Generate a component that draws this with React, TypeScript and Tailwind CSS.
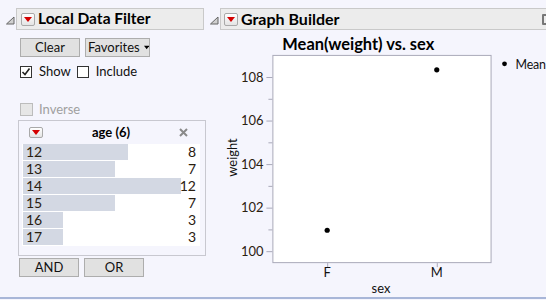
import React from 'react'

const FONT = { fontFamily: 'Lato, "Noto Sans", Arial, sans-serif' }

function Disclosure() {
  return (
    <div className="shrink-0 w-[10px] h-[9px] relative">
      <svg width="10" height="9" viewBox="0 0 10 9" style={{ display: 'block', width: 10, height: 9 }}>
        <path d="M9 1 L9 8 L1.5 8 Z" fill="#d0d0d0" stroke="#666666" strokeWidth="1" />
      </svg>
    </div>
  )
}

function RedMenu({ small }: { small?: boolean }) {
  return (
    <div
      className={`shrink-0 flex items-center justify-center rounded-[2px] border border-[#a9a9a9] bg-gradient-to-b from-white to-[#e4e4e4] ${
        small ? 'w-[14px] h-[11px]' : 'w-[14px] h-[13px]'
      }`}
    >
      <svg width="8" height="5" viewBox="0 0 8 5">
        <polygon points="0,0 8,0 4,5" fill="#d40000" />
      </svg>
    </div>
  )
}

function Btn({ children, w }: { children: React.ReactNode; w: string }) {
  return (
    <div
      className={`${w} h-[19px] flex items-center justify-center border border-[#adadad] bg-[#e1e1e1] text-[13px] text-[#111] leading-none`}
    >
      {children}
    </div>
  )
}

const ROWS = [
  { age: '12', n: 8 },
  { age: '13', n: 7 },
  { age: '14', n: 12 },
  { age: '15', n: 7 },
  { age: '16', n: 3 },
  { age: '17', n: 3 },
]

function Chart() {
  const y = (v: number) => 252 - (v - 100) * 21.85
  const majors = [100, 102, 104, 106, 108]
  const minors = [101, 103, 105, 107, 109]
  return (
    <svg width="338" height="268" viewBox="208 30 338 268" style={FONT} className="block">
      <text x="282" y="50" fontSize="16.5" fontWeight="700" fill="#000">
        Mean(weight) vs. sex
      </text>
      <rect x="272.5" y="55.5" width="219" height="208" fill="#fff" stroke="#a9a9b9" />
      {majors.map(v => (
        <g key={v}>
          <line x1="266" x2="272" y1={y(v) + 0.5} y2={y(v) + 0.5} stroke="#a9a9b9" />
          <text x="263" y={y(v) + 4.5} fontSize="13" textAnchor="end" fill="#2a2010">
            {v}
          </text>
        </g>
      ))}
      {minors.map(v =>
        y(v) > 56 ? (
          <line key={v} x1="268" x2="272" y1={y(v) + 0.5} y2={y(v) + 0.5} stroke="#a9a9b9" />
        ) : null,
      )}
      <text
        x="0"
        y="0"
        fontSize="13"
        fill="#111"
        textAnchor="middle"
        transform="translate(236 158) rotate(-90)"
      >
        weight
      </text>
      <line x1="327.5" x2="327.5" y1="264" y2="268" stroke="#a9a9b9" />
      <line x1="437.5" x2="437.5" y1="264" y2="268" stroke="#a9a9b9" />
      <text x="327" y="278" fontSize="13" textAnchor="middle" fill="#111">F</text>
      <text x="437" y="278" fontSize="13" textAnchor="middle" fill="#111">M</text>
      <text x="381" y="294" fontSize="13" textAnchor="middle" fill="#111">sex</text>
      <circle cx="327" cy={231} r="2.6" fill="#000" />
      <circle cx="437" cy={70} r="2.6" fill="#000" />
      <circle cx="505" cy="64" r="2.4" fill="#000" />
      <text x="516" y="69" fontSize="12.5" letterSpacing="-0.2" fill="#111">Mean</text>
    </svg>
  )
}

export default function App() {
  return (
    <div className="w-[546px] h-[300px] bg-[#f5f5fd] overflow-hidden flex flex-col" style={FONT}>
      <div className="flex flex-1 min-h-0">
        {/* Local Data Filter */}
        <div className="w-[208px] shrink-0 flex flex-col pt-[8px]">
          <div className="flex items-center">
            <div className="pl-[5px] pr-[1px] pt-[3px] shrink-0">
              <Disclosure />
            </div>
            <div className="w-[188px] h-[22px] flex items-center gap-[3px] pl-[4px] border border-[#c9c9c9] bg-[#ececec]">
              <RedMenu />
              <span className="text-[15.5px] font-bold text-black leading-none">Local Data Filter</span>
            </div>
          </div>

          <div className="flex gap-[5px] pl-[20px] mt-[8px]">
            <Btn w="w-[60px]">Clear</Btn>
            <div className="w-[65px] h-[19px] flex items-center gap-[4px] pl-[2px] border border-[#adadad] bg-[#e1e1e1] text-[13px] text-[#111] leading-none">
              Favorites
              <svg width="8" height="5" viewBox="0 0 8 5">
                <polygon points="0,0 8,0 4,5" fill="#000" />
              </svg>
            </div>
          </div>

          <div className="flex items-center pl-[20px] mt-[8px] text-[13px] text-[#111] leading-none">
            <div className="w-[12px] h-[12px] border border-[#333] bg-white flex items-center justify-center">
              <svg width="10" height="10" viewBox="0 0 10 10">
                <polyline points="1.5,5 4,7.5 8.5,1.5" fill="none" stroke="#222" strokeWidth="1.6" />
              </svg>
            </div>
            <span className="ml-[7px]">Show</span>
            <div className="ml-[6px] w-[12px] h-[12px] border border-[#333] bg-white" />
            <span className="ml-[7px]">Include</span>
          </div>

          <div className="flex items-center pl-[20px] mt-[25px] text-[13px] text-[#a0a0a0] leading-none">
            <div className="w-[13px] h-[13px] border border-[#bcbcbc] bg-[#e6e6e6]" />
            <span className="ml-[6px]">Inverse</span>
          </div>

          <div className="ml-[18px] mt-[4px] w-[188px] h-[136px] border border-[#c8c8d0] flex flex-col px-[3px]">
            <div className="h-[23px] flex items-center px-[7px]">
              <RedMenu small />
              <span className="flex-1 text-center text-[13px] font-bold text-black leading-none">age (6)</span>
              <svg width="9" height="9" viewBox="0 0 9 9" className="mr-[7px]">
                <path d="M1 1 L8 8 M8 1 L1 8" stroke="#8a8a8a" strokeWidth="2" />
              </svg>
            </div>
            <div className="bg-white w-[178px] h-[102px] flex flex-col gap-[1px]">
              {ROWS.map(r => (
                <div key={r.age} className="relative h-[16px] flex items-center">
                  <div
                    className="absolute left-[1px] top-0 bottom-0 bg-[#d3d8e3]"
                    style={{ width: `${Math.round((r.n / 12) * 158)}px` }}
                  />
                  <span className="relative pl-[4px] text-[14px] text-[#2a2010] leading-none flex-1">{r.age}</span>
                  <span className="relative pr-[4px] text-[14px] text-[#2a2010] leading-none">{r.n}</span>
                </div>
              ))}
            </div>
          </div>

          <div className="flex gap-[5px] pl-[19px] mt-[2px]">
            <Btn w="w-[60px]">AND</Btn>
            <Btn w="w-[60px]">OR</Btn>
          </div>
        </div>

        {/* Graph Builder */}
        <div className="flex-1 flex flex-col pt-[8px] min-w-0">
          <div className="flex items-center">
            <div className="pl-[1px] pr-[1px] pt-[3px] shrink-0">
              <Disclosure />
            </div>
            <div className="flex-1 h-[22px] flex items-center gap-[3px] pl-[3px] border border-r-0 border-[#c9c9c9] bg-[#ececec]">
              <RedMenu />
              <span className="text-[16px] font-bold text-black leading-none">Graph Builder</span>
              <div className="ml-auto mr-[-4px] w-[8px] h-[11px] border-2 border-[#777] rounded-[1px]" />
            </div>
          </div>
          <Chart />
        </div>
      </div>
      <div className="h-[2px] bg-[#a8b6d8] shrink-0 mb-[1px]" />
    </div>
  )
}
